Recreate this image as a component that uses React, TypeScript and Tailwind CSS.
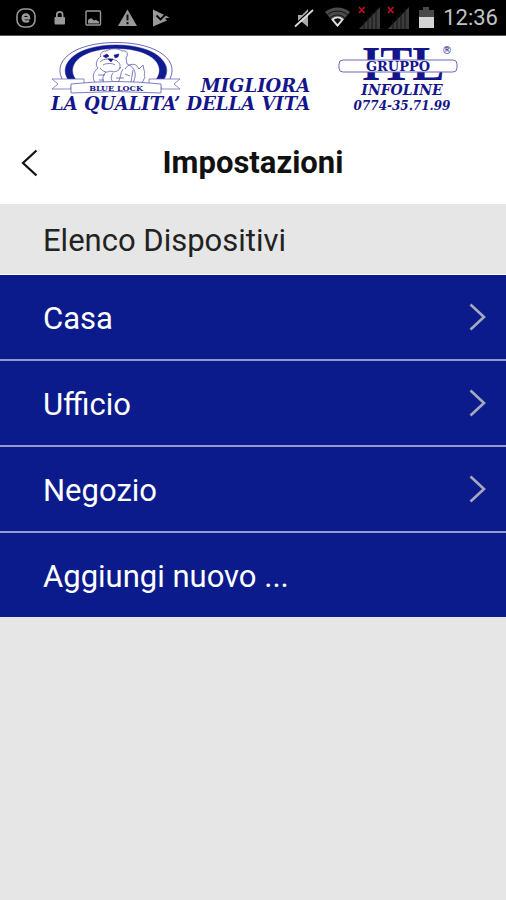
import React from "react";

const devices = ["Casa", "Ufficio", "Negozio"];

function StatusBar() {
  return (
    <div className="flex h-9 items-center justify-between border-b border-[#555] bg-black pr-2 pl-4">
      <div className="flex items-center gap-3.5 text-[#999]">
        <svg className="h-5 w-5" viewBox="0 0 20 20" fill="none" stroke="currentColor">
          <rect x="1" y="1" width="18" height="18" rx="7" strokeWidth="1.6" />
          <path d="M6.500 10.200h6.600c0-2.400-1.200-3.700-3.100-3.700s-3.300 1.400-3.300 3.600 1.400 3.500 3.500 3.500c1.100 0 2-.3 2.700-.9" strokeWidth="2.400" />
        </svg>
        <svg className="h-5 w-5" viewBox="0 0 20 20">
          <rect x="4.500" y="9" width="10.500" height="7.500" rx="1" fill="currentColor" />
          <path d="M6.800 9V6.700a2.900 2.900 0 0 1 5.800 0V9" fill="none" stroke="currentColor" strokeWidth="1.700" />
        </svg>
        <svg className="h-5 w-5" viewBox="0 0 20 20">
          <rect x="2" y="3" width="14.500" height="14" rx="1" fill="none" stroke="currentColor" strokeWidth="1.400" />
          <path d="M4 15.500v-3.500l3-2 3 2.500 2-.8 3 2v1.800z" fill="currentColor" />
        </svg>
        <svg className="h-5 w-5" viewBox="0 0 20 20">
          <path d="M9.500 1.500 19 18H0z" fill="currentColor" />
          <path d="M9.500 6.500v6M9.500 14v2.200" stroke="#111" strokeWidth="2" />
        </svg>
        <svg className="h-5 w-5" viewBox="0 0 20 20">
          <path d="M1 1.500 17.500 9.500 13 10.500l2 2L1 18.500z" fill="currentColor" />
          <path d="m4.500 7.500 4 4L16 4" fill="none" stroke="#000" strokeWidth="1.800" />
        </svg>
      </div>
      <div className="flex items-center gap-1.5">
        <svg className="h-6 w-6" viewBox="0 0 24 24">
          <path d="M4 9h4l6-6v18l-6-5H4z" fill="#aaa" />
          <path d="M0 19.500 18 3" stroke="#000" strokeWidth="1.500" />
          <path d="M1 20.500 19 4" stroke="#ddd" strokeWidth="1.700" />
        </svg>
        <svg className="h-6 w-7" viewBox="0 0 28 24">
          <path d="M1 6c7-6 18-6 25 0L13.500 21z" fill="#4b4b4b" />
          <path d="M3.500 8.500c6-4.500 14-4.500 20 0M6 12c4.500-4 10.500-4 15 0" fill="none" stroke="#111" strokeWidth="1" />
          <path d="M8.500 13.500c3-2.500 7-2.500 10 0l-5 6z" fill="#111" stroke="#e5e5e5" strokeWidth="1.800" />
        </svg>
        <SignalIcon />
        <SignalIcon />
        <svg className="h-6 w-[21px]" viewBox="0 0 21 24">
          <path d="M7 1h6v3h5v8H3V4h4z" fill="#484848" />
          <path d="M3 11h15v11H3z" fill="#d4d4d4" />
        </svg>
        <span className="text-[22px] leading-6 text-[#c4c4c4]">12:36</span>
      </div>
    </div>
  );
}

function SignalIcon() {
  return (
    <svg className="h-6 w-[23px]" viewBox="0 0 23 24">
      <path d="M1 23 22 1v22z" fill="#3c3c3c" />
      <path d="M6 14v9M10 10v13M14 6v17M18 3v20" stroke="#151515" strokeWidth="1" />
      <path d="m1 1 5.500 6M6.500 1 1 7" stroke="#c1121f" strokeWidth="1.600" />
    </svg>
  );
}

function BulldogEmblem() {
  return (
    <svg className="h-14 w-[130px]" viewBox="0 0 130 56" fill="none" stroke="#17178c" role="img" aria-label="Blue Lock">
      <path d="M13 42C-1 22 22 2.500 65 2.500S131 22 117 42" strokeWidth="0.900" stroke="#5a5ab0" />
      <path d="M20 43C4 27 22 5 65 5s61 22 45 38l-7-1c14-14 1-33.500-38-33.500S13 28 27 42z" fill="#101a91" strokeWidth="0.500" />
      <g strokeWidth="0.800" stroke="#5a5ab0">
        <path d="M50 17c-2-3 1-6 5-6 5-3 12-3 16 0 5-1 7 3 4 7l1 6c7 3 9 8 8 13l-2 7" />
        <path d="M50 16c-5 4-6 9-3 12-5 4-6 9-3 15M49 28c3 4 7 5 10 3 5 2 9 0 11-4" />
        <path d="M49 22c4-4 12-4 17-1 3 2 4 5 2 8M52 25c3-2 10-2 12 0" />
        <path d="M55 32c-4 4-4 9-1 12M62 33c-3 4-2 8 2 11M72 29c-3 4-2 9-5 14" />
        <path d="M74 29c3-5 9-6 12-3l2 3 4-4 1 5c2 2-1 5 1 7l-3 6M82 30l-2 12" />
        <path d="M47 35h7M48 40h5M65 38h8M74 34l5 2" />
      </g>
      <path d="m52 16 4-2 2 2-3 2zM63 15l5-1-1 3-3 1zM57 19h5l-2 3z" fill="#17178c" strokeWidth="0.500" />
      <path d="M20 49H1l6-5-6-5h32v7H20zM110 49h19l-6-5 6-5H98v7h12z" fill="white" strokeWidth="0.700" stroke="#5a5ab0" />
      <path d="M20 44q45-5 90 0v9q-45-3-90 0z" fill="white" strokeWidth="0.800" stroke="#5a5ab0" />
      <text x="65" y="51" textAnchor="middle" fill="#17178c" stroke="none" className="font-['DejaVu_Serif',serif] text-[8px] font-bold not-italic">
        BLUE LOCK
      </text>
    </svg>
  );
}

function ItlLogo() {
  return (
    <svg className="h-10 w-[120px] overflow-visible" viewBox="0 0 120 40" fill="#15158a">
      <text x="65" y="38" textAnchor="middle" className="font-['Liberation_Serif',serif] text-[48px] font-bold">
        ITL
      </text>
      <rect x="1" y="18" width="118" height="12" rx="4" fill="white" stroke="#6b6bb8" />
      <text x="60" y="29" textAnchor="middle" className="font-['DejaVu_Serif',serif] text-[13px] font-bold">
        GRUPPO
      </text>
      <text x="109" y="12" textAnchor="middle" className="font-['DejaVu_Sans',sans-serif] text-[10px] font-normal">
        ®
      </text>
    </svg>
  );
}

function Banner() {
  return (
    <div className="flex justify-between pt-1 pr-12 pb-2 pl-[51px] font-['DejaVu_Serif',serif] font-bold text-[#15158a] italic">
      <div>
        <div className="flex items-end justify-between">
          <BulldogEmblem />
          <span className="text-[18px] leading-5">MIGLIORA</span>
        </div>
        <p className="text-[18px] leading-4 whitespace-nowrap">LA QUALITA’ DELLA VITA</p>
      </div>
      <div className="flex flex-col items-center pt-0.5">
        <div className="not-italic">
          <ItlLogo />
        </div>
        <p className="pl-2 text-[14px] leading-4">INFOLINE</p>
        <p className="pl-2 text-[12px] leading-4">0774-35.71.99</p>
      </div>
    </div>
  );
}

export default function App() {
  return (
    <div className="flex min-h-screen flex-col bg-[#e6e6e6] font-[Roboto,sans-serif]">
      <StatusBar />
      <header className="bg-white">
        <Banner />
        <div className="grid h-[82px] grid-cols-[60px_1fr_60px] items-center">
          <button type="button" aria-label="Indietro" className="flex h-full items-center pl-5">
            <svg className="h-7 w-5" viewBox="0 0 20 28" fill="none" stroke="#111" strokeWidth="2.200">
              <path d="M16.500 1.500 3 14l13.500 12.500" />
            </svg>
          </button>
          <h1 className="text-center text-[31px] leading-9 font-bold text-[#111]">Impostazioni</h1>
        </div>
      </header>
      <main>
        <h2 className="flex h-[71px] items-center border-b border-white pt-1 pl-[43px] text-[31px] leading-9 text-[#222]">
          Elenco Dispositivi
        </h2>
        <ul className="divide-y-2 divide-[#9699d0] bg-[#0b1b8c] text-[31px] leading-9 text-white">
          {devices.map((name) => (
            <li key={name}>
              <button type="button" className="flex h-[84px] w-full items-center justify-between pr-[19px] pl-[43px] text-left">
                <span className="pt-1">{name}</span>
                <svg className="h-7 w-5" viewBox="0 0 20 28" fill="none" stroke="#a4a9bd" strokeWidth="2.600">
                  <path d="M3.500 1.500 17 14 3.500 26.500" />
                </svg>
              </button>
            </li>
          ))}
          <li>
            <button type="button" className="flex h-[84px] w-full items-center pl-[43px] text-left">
              <span className="pt-1">Aggiungi nuovo ...</span>
            </button>
          </li>
        </ul>
      </main>
    </div>
  );
}
